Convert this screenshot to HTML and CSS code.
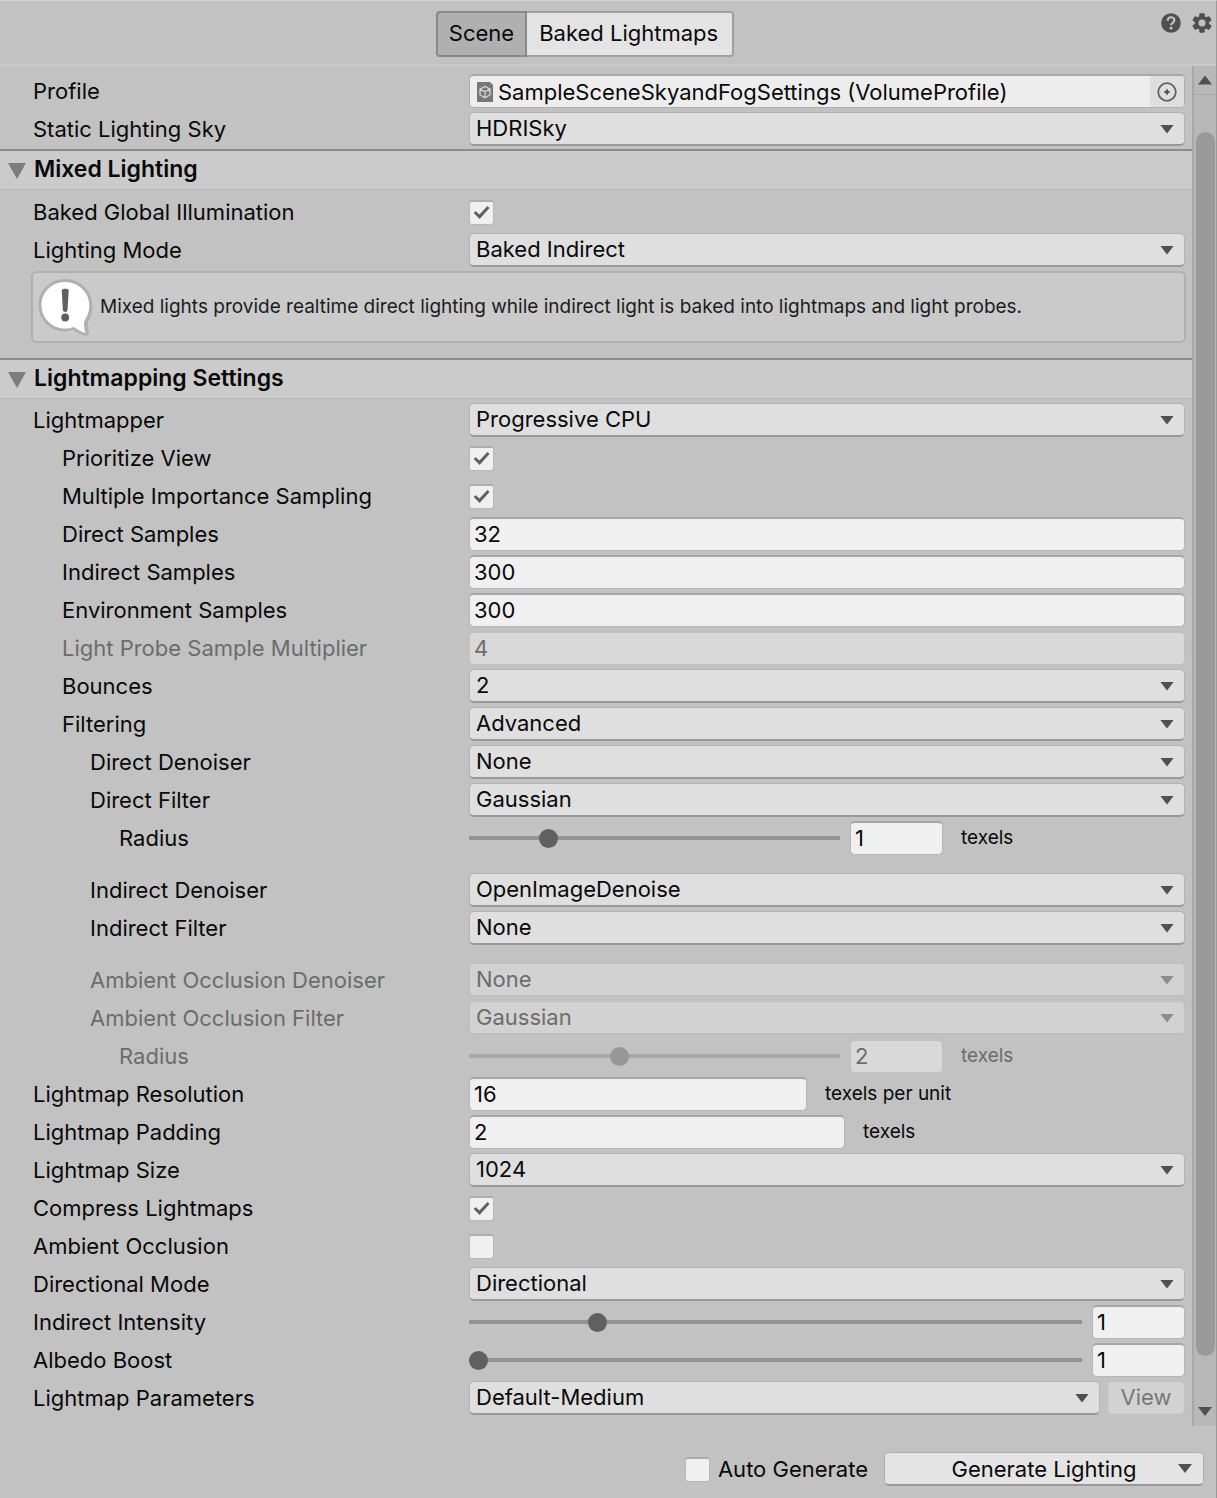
FILE: index.html
```html
<!DOCTYPE html>
<html lang="en">
<head>
<meta charset="utf-8">
<meta name="viewport" content="width=device-width, initial-scale=1">
<title>Lighting</title>
<link rel="stylesheet" href="styles.css">
</head>
<body>
<header class="toolbar">
  <nav class="tabs" aria-label="Views">
    <button type="button" class="tab tab-active">Scene</button>
    <button type="button" class="tab">Baked Lightmaps</button>
  </nav>
  <div class="tools">
    <button type="button" class="icon-button" aria-label="Help">
      <svg width="20" height="20" viewBox="0 0 20 20"><circle cx="10" cy="10" r="9.8" fill="#4f4f4f"/><path d="M6.7 7.8C6.7 5.6 8 4.3 10 4.3s3.4 1.2 3.4 3c0 2.600-3.300 2.500-3.300 5" fill="none" stroke="#c4c4c4" stroke-width="2.100"/><circle cx="10.100" cy="15.200" r="1.400" fill="#c4c4c4"/></svg>
    </button>
    <button type="button" class="icon-button" aria-label="Settings">
      <svg width="20" height="20" viewBox="0 0 20 20"><g fill="#4f4f4f"><rect x="7.300" y="0.300" width="5.400" height="19.400" rx="1"/><rect x="7.300" y="0.300" width="5.400" height="19.400" rx="1" transform="rotate(60 10 10)"/><rect x="7.300" y="0.300" width="5.400" height="19.400" rx="1" transform="rotate(120 10 10)"/><circle cx="10" cy="10" r="7.200"/></g><circle cx="10" cy="10" r="3.500" fill="#c2c2c2"/></svg>
    </button>
  </div>
</header>

<div class="viewport">
<main class="panel">
  <section class="group group-first">
    <div class="row"><label for="profile">Profile</label>
      <div class="object-field">
        <svg width="16" height="20" viewBox="0 0 16 20"><path d="M0 0h13l3 3v17H0z" fill="#777"/><path d="M8 4.500l5 2.500v6l-5 2.700L3 13V7zM3 7l5 2.700L13 7M8 9.700v6" fill="none" stroke="#dcdcdc" stroke-width="1.200"/></svg>
        <input id="profile" type="text" readonly value="SampleSceneSkyandFogSettings (VolumeProfile)">
        <button type="button" class="picker" aria-label="Select profile"><svg width="20" height="20" viewBox="0 0 20 20"><circle cx="10" cy="10" r="8.800" fill="none" stroke="#606060" stroke-width="1.800"/><path d="M10 6.500l1.200 2.300 2.300 1.200-2.300 1.200L10 13.500l-1.200-2.300L6.500 10l2.300-1.200z" fill="#505050"/></svg></button>
      </div>
    </div>
    <div class="row"><label for="sky">Static Lighting Sky</label><div class="select"><select id="sky"><option>HDRISky</option></select></div></div>
  </section>

  <h2 class="section-title"><button type="button" aria-expanded="true">Mixed Lighting</button></h2>
  <section class="group">
    <div class="row"><label for="baked-gi">Baked Global Illumination</label><input id="baked-gi" type="checkbox" checked></div>
    <div class="row"><label for="mode">Lighting Mode</label><div class="select"><select id="mode"><option>Baked Indirect</option></select></div></div>
    <div class="notice">
      <svg width="58" height="62" viewBox="0 0 58 62"><path d="M28 3C13 3 1.500 14.500 1.500 29S13 55.500 28 55.500c3 0 5.500-.5 8-1.400 4.500 2.500 8 5.400 12.500 5.800 3 0 4-2 3.300-4.300-1-4-1.200-6.500-.8-9.600 2.800-4.500 4.500-10 4.500-16C55.500 14.500 43 3 28 3z" fill="#b0b0b0"/><path d="M28 6C15 6 4.500 16 4.500 29S15 52.500 28 52.500c3 0 5.600-.5 8.500-1.600 4.300 2 7.500 5 12 6-1.200-4.500-1.900-8-1.200-12 3-4.500 5-9.500 5-15C52.500 16 41 6 28 6z" fill="#fff"/><path d="M24.700 14.500c0-2.400 7-2.400 7 0l-1.200 19.500c-.2 2.500-4.400 2.500-4.600 0z" fill="#606060"/><circle cx="28.200" cy="41.500" r="3.900" fill="#606060"/></svg>
      <p>Mixed lights provide realtime direct lighting while indirect light is baked into lightmaps and light probes.</p>
    </div>
  </section>

  <h2 class="section-title"><button type="button" aria-expanded="true">Lightmapping Settings</button></h2>
  <section class="group group-last">
    <div class="row"><label for="mapper">Lightmapper</label><div class="select"><select id="mapper"><option>Progressive CPU</option></select></div></div>
    <div class="row indent-1"><label for="priority">Prioritize View</label><input id="priority" type="checkbox" checked></div>
    <div class="row indent-1"><label for="mis">Multiple Importance Sampling</label><input id="mis" type="checkbox" checked></div>
    <div class="row indent-1"><label for="direct">Direct Samples</label><input id="direct" type="text" value="32"></div>
    <div class="row indent-1"><label for="indirect">Indirect Samples</label><input id="indirect" type="text" value="300"></div>
    <div class="row indent-1"><label for="environment">Environment Samples</label><input id="environment" type="text" value="300"></div>
    <div class="row indent-1 disabled"><label for="probe">Light Probe Sample Multiplier</label><input id="probe" type="text" value="4" disabled></div>
    <div class="row indent-1"><label for="bounces">Bounces</label><div class="select"><select id="bounces"><option>2</option></select></div></div>
    <div class="row indent-1"><label for="filtering">Filtering</label><div class="select"><select id="filtering"><option>Advanced</option></select></div></div>
    <div class="row indent-2"><label for="dd">Direct Denoiser</label><div class="select"><select id="dd"><option>None</option></select></div></div>
    <div class="row indent-2"><label for="df">Direct Filter</label><div class="select"><select id="df"><option>Gaussian</option></select></div></div>
    <div class="row indent-3 row-spaced"><label for="dr">Radius</label>
      <div class="fields"><div class="slider slider-short"><input type="range" aria-label="Radius slider" min="0" max="5" value="1"><input id="dr" type="text" value="1"></div><span class="unit">texels</span></div></div>
    <div class="row indent-2"><label for="id">Indirect Denoiser</label><div class="select"><select id="id"><option>OpenImageDenoise</option></select></div></div>
    <div class="row indent-2 row-spaced"><label for="if">Indirect Filter</label><div class="select"><select id="if"><option>None</option></select></div></div>
    <div class="row indent-2 disabled"><label for="aod">Ambient Occlusion Denoiser</label><div class="select"><select id="aod" disabled><option>None</option></select></div></div>
    <div class="row indent-2 disabled"><label for="aof">Ambient Occlusion Filter</label><div class="select"><select id="aof" disabled><option>Gaussian</option></select></div></div>
    <div class="row indent-3 disabled"><label for="aor">Radius</label>
      <div class="fields"><div class="slider slider-short"><input type="range" aria-label="Ambient occlusion radius slider" min="0" max="5" value="2" disabled><input id="aor" type="text" value="2" disabled></div><span class="unit">texels</span></div></div>
    <div class="row"><label for="resolution">Lightmap Resolution</label><div class="fields"><input id="resolution" class="field-resolution" type="text" value="16"><span class="unit">texels per unit</span></div></div>
    <div class="row"><label for="padding">Lightmap Padding</label><div class="fields"><input id="padding" class="field-padding" type="text" value="2"><span class="unit">texels</span></div></div>
    <div class="row"><label for="size">Lightmap Size</label><div class="select"><select id="size"><option>1024</option></select></div></div>
    <div class="row"><label for="compress">Compress Lightmaps</label><input id="compress" type="checkbox" checked></div>
    <div class="row"><label for="ao">Ambient Occlusion</label><input id="ao" type="checkbox"></div>
    <div class="row"><label for="directional">Directional Mode</label><div class="select"><select id="directional"><option>Directional</option></select></div></div>
    <div class="row"><label for="intensity">Indirect Intensity</label><div class="slider"><input type="range" aria-label="Indirect intensity slider" min="0" max="5" value="1"><input id="intensity" type="text" value="1"></div></div>
    <div class="row"><label for="albedo">Albedo Boost</label><div class="slider"><input type="range" aria-label="Albedo boost slider" min="1" max="10" value="1"><input id="albedo" type="text" value="1"></div></div>
    <div class="row"><label for="params">Lightmap Parameters</label><div class="with-button"><div class="select"><select id="params"><option>Default-Medium</option></select></div><button type="button" class="view-button" disabled>View</button></div></div>
  </section>
</main>
<div class="scrollbar" aria-hidden="true">
  <div class="scroll-end scroll-up"></div>
  <div class="scroll-thumb"></div>
  <div class="scroll-end scroll-down"></div>
</div>
</div>

<footer class="actions">
  <label class="auto"><input type="checkbox">Auto Generate</label>
  <button type="button" class="generate"><span>Generate Lighting</span></button>
</footer>
</body>
</html>
```
FILE: styles.css
```css
* { box-sizing: border-box; }

body {
  margin: 0;
  min-height: 100vh;
  display: flex;
  flex-direction: column;
  background: #c2c2c2;
  border-top: 1px solid #d0d0d0;
  border-right: 1px solid #999;
  color: #090909;
  font: 22px/28px Inter, "Liberation Sans", sans-serif;
}

button, input, select {
  margin: 0;
  padding: 0;
  border: 0;
  border-radius: 0;
  background: none;
  color: inherit;
  font: inherit;
}

/* Top bar */
.toolbar {
  display: grid;
  grid-template-columns: 1fr 56px;
  align-items: start;
  height: 65px;
  padding: 10px 0 0 10px;
  border-bottom: 2px solid #cbcbcb;
}
.tabs { display: flex; justify-content: center; }
.tab {
  height: 46px;
  padding: 0 14px 2px 12px;
  border: 2px solid #a0a0a0;
  border-left: 0;
  border-radius: 0 4px 4px 0;
  background: #e4e4e4;
}
.tab-active {
  padding: 0 11px 2px;
  border: 2px solid #888;
  border-radius: 4px 0 0 4px;
  background: #b0b0b0;
}
.tools { display: flex; gap: 11px; padding: 2px 0 0 1px; }
.icon-button { display: flex; }

/* Scrolling area */
.viewport { flex: 1; display: flex; }
.panel { flex: 1; min-width: 0; }
.group { padding: 3px 7px 0 33px; }
.group-first { padding-top: 6px; padding-bottom: 1px; }
.group-last { padding-top: 2px; padding-bottom: 9px; }

.section-title {
  margin: 0;
  border-top: 2px solid #8c8c8c;
  border-bottom: 1px solid #bababa;
  background: #cbcbcb;
  font: inherit;
}
.section-title button {
  display: flex;
  align-items: center;
  gap: 8px;
  width: 100%;
  height: 38px;
  padding: 0 8px 2px;
  font-size: 23px;
  font-weight: 600;
}
.section-title button::before {
  content: "";
  width: 18px;
  height: 16px;
  margin-top: 4px;
  background: #7c7c7c;
  clip-path: polygon(0 0, 100% 0, 50% 100%);
}

/* Property rows */
.row {
  display: grid;
  grid-template-columns: 436px minmax(0, 1fr);
  align-items: center;
  height: 38px;
}
.row-spaced { margin-bottom: 14px; }
.indent-1 > label { padding-left: 29px; }
.indent-2 > label { padding-left: 57px; }
.indent-3 > label { padding-left: 86px; }
.disabled { color: #6c6c6c; }

input[type="text"] {
  width: 100%;
  min-width: 0;
  height: 34px;
  padding: 0 4px 1px;
  border: 1px solid #b5b5b5;
  border-top: 2px solid #a6a6a6;
  border-radius: 5px;
  background: #f0f0f0;
}
input[type="text"]:disabled { border-color: #c0c0c0; background: #d9d9d9; }

.select { display: grid; align-items: center; flex: 1; min-width: 0; }
.select > select {
  grid-area: 1 / 1;
  appearance: none;
  width: 100%;
  height: 34px;
  padding: 0 34px 2px 6px;
  border: 1px solid #b3b3b3;
  border-bottom: 2px solid #999;
  border-radius: 5px;
  background: #dfdfdf;
  opacity: 1;
}
.select > select:disabled { border-color: #bebebe; background: #d2d2d2; }
.select::after, .generate::after {
  content: "";
  grid-area: 1 / 1;
  justify-self: end;
  width: 14px;
  height: 9px;
  margin-right: 11px;
  background: #505050;
  clip-path: polygon(0 0, 100% 0, 50% 100%);
  pointer-events: none;
}
.disabled .select::after { background: #8c8c8c; }

input[type="checkbox"] {
  appearance: none;
  display: grid;
  place-items: center;
  width: 25px;
  height: 25px;
  border: 1px solid #b8b8b8;
  border-top: 2px solid #adadad;
  border-radius: 3px;
  background: #f0f0f0;
}
input[type="checkbox"]:checked::before {
  content: "";
  width: 16px;
  height: 13px;
  background: #606060;
  clip-path: polygon(0 52%, 14% 40%, 37% 66%, 87% 0, 100% 16%, 38% 100%);
}

.fields, .slider, .with-button { display: flex; align-items: center; min-width: 0; }
.slider { gap: 10px; }
.slider-short { flex: 0 1 474px; }
.slider input[type="text"] { flex: 0 0 93px; }
input[type="range"] {
  appearance: none;
  flex: 1;
  min-width: 0;
  height: 20px;
}
input[type="range"]::-webkit-slider-runnable-track { height: 4px; background: #939393; }
input[type="range"]::-webkit-slider-thumb {
  appearance: none;
  width: 19px;
  height: 19px;
  margin-top: -7px;
  border-radius: 50%;
  background: #606060;
}
input[type="range"]:disabled::-webkit-slider-runnable-track { background: #a8a8a8; }
input[type="range"]:disabled::-webkit-slider-thumb { background: #979797; }
.field-resolution { flex: 0 1 338px; }
.field-padding { flex: 0 1 376px; }
.unit { padding-left: 18px; font-size: 19px; white-space: nowrap; }

.object-field {
  display: flex;
  align-items: center;
  gap: 5px;
  height: 34px;
  padding-left: 7px;
  border: 1px solid #b0b0b0;
  border-top: 2px solid #a8a8a8;
  border-radius: 5px;
  background: #ededed;
}
.object-field svg { flex: none; }
.object-field input[type="text"] { flex: 1; height: 31px; padding: 0; border: 0; background: none; }
.picker {
  display: grid;
  place-items: center;
  align-self: stretch;
  width: 34px;
  border-radius: 4px;
  background: #dedede;
}

.with-button { gap: 7px; }
.view-button {
  width: 78px;
  height: 34px;
  padding-bottom: 2px;
  border: 1px solid #bebebe;
  border-radius: 5px;
  background: #d2d2d2;
  color: #777;
}

.notice {
  display: flex;
  align-items: center;
  gap: 5px;
  min-height: 72px;
  margin: 2px -1px 15px -2px;
  padding: 0 4px;
  border: 2px solid #b0b0b0;
  border-radius: 6px;
  background: #cacaca;
  color: #1c1c1c;
  font-size: 19px;
}
.notice svg { flex: none; }
.notice p { margin: 0; }

/* Scroll bar */
.scrollbar {
  display: flex;
  flex-direction: column;
  width: 24px;
  border-left: 2px solid #a8a8a8;
  background: #b8b8b8;
}
.scroll-end { display: grid; place-items: center; height: 29px; }
.scroll-end::before {
  content: "";
  width: 14px;
  height: 9px;
  background: #505050;
}
.scroll-up { border-bottom: 1px solid #a8a8a8; }
.scroll-up::before { clip-path: polygon(50% 0, 100% 100%, 0 100%); }
.scroll-down::before { clip-path: polygon(0 0, 100% 0, 50% 100%); }
.scroll-thumb { flex: 1; margin: 37px 1px 41px 2px; border-radius: 10px; background: #999; }

/* Bottom bar */
.actions {
  display: flex;
  justify-content: flex-end;
  align-items: center;
  gap: 16px;
  height: 72px;
  padding: 14px 12px 0 0;
}
.auto { display: flex; align-items: center; gap: 8px; }
.generate {
  display: grid;
  grid-template-rows: 31px;
  align-items: center;
  width: 320px;
  height: 34px;
  border: 1px solid #b0b0b0;
  border-bottom: 2px solid #999;
  border-radius: 5px;
  background: #e4e4e4;
}
.generate span { grid-area: 1 / 1; }
```
